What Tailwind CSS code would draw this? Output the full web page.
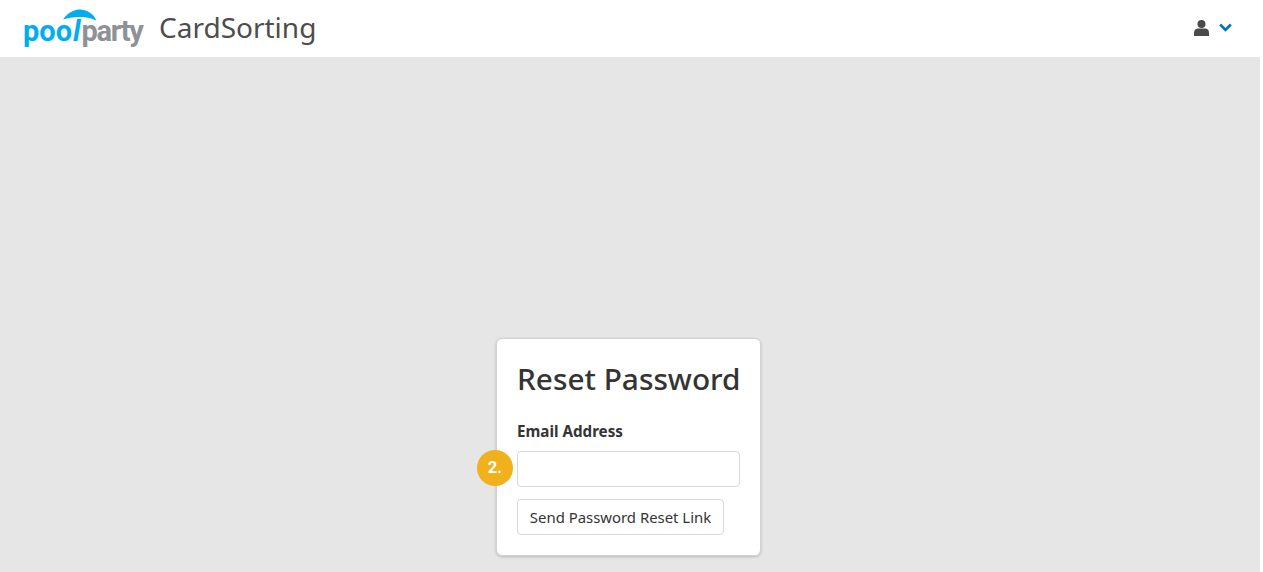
<!DOCTYPE html>
<html lang="en">
<head>
  <meta charset="UTF-8">
  <title>Reset Password | CardSorting</title>
  <script src="https://cdn.jsdelivr.net/npm/@tailwindcss/browser@4"></script>
</head>
<body class="bg-white h-[572px] overflow-hidden font-['Noto_Sans',sans-serif] text-[#343434]">
  <div class="w-[1260px] h-full flex flex-col bg-[#e6e6e6]">
    <!-- Header -->
    <header class="h-[57px] bg-white flex items-center justify-between pl-6 pr-[28px]">
      <div class="flex items-center">
        <div class="relative w-[120px] h-[46px]">
          <svg class="absolute left-[39px] top-[3px]" width="34" height="12" viewBox="0 0 34 12">
            <path d="M0 10.5 C5 3 12 0.5 17 0.5 C23 0.5 30 4 33.500 11.500 C27 8.500 21 7.500 15 8 C10 8.300 5 9 0 10.500 Z" fill="#00aeef"/>
          </svg>
          <div class="absolute left-[-1px] top-[6px] flex text-[29px] leading-[38px] font-['Roboto',sans-serif] font-bold">
            <span class="text-[#00aeef] tracking-[0px]">poo<i class="ml-[1px] mr-[1px]">l</i></span><span class="text-[#8d9297] tracking-[-1.3px]">party</span>
          </div>
        </div>
        <span class="ml-[15px] mt-[-4px] text-[28px] leading-[36px] text-[#4d4d4d] font-normal">CardSorting</span>
      </div>
      <div class="flex items-center gap-[10px] mt-[-2px]">
        <svg width="15" height="16" viewBox="0 0 15 16" fill="#4a4a4a">
          <circle cx="7.5" cy="4" r="4"/>
          <path d="M0 16 V12.500 C0 10 2 8.500 4 8.500 H11 C13 8.500 15 10 15 12.500 V16 Z"/>
        </svg>
        <svg width="13" height="9" viewBox="0 0 13 9" fill="none" stroke="#0074b3" stroke-width="2.6">
          <path d="M1.200 1.500 L6.500 6.800 L11.800 1.500"/>
        </svg>
      </div>
    </header>

    <!-- Card -->
    <main class="flex-1 flex justify-center pt-[281px]">
      <div class="w-[265px] h-[218px] ml-[-3px] bg-white border border-[#d2d2d2] rounded-[6px] shadow-[0_1px_3px_rgba(0,0,0,0.2)] px-5 pt-[17px]">
        <h1 class="text-[29.8px] leading-[46px] font-medium whitespace-nowrap">Reset Password</h1>
        <label class="block mt-[19px] text-[15.200px] leading-[20px] font-bold">Email Address</label>
        <div class="relative mt-[10px]">
          <span class="absolute left-[-40px] top-[-1px] w-9 h-9 rounded-full bg-[#f0b11d] text-white flex items-center justify-center text-[16.500px] font-bold font-['Roboto',sans-serif]">2.</span>
          <input type="text" class="block w-[223px] h-9 bg-white border border-[#d8d8d8] rounded-[4px]">
        </div>
        <button class="block mt-[12px] h-9 w-[207px] bg-white border border-[#d8d8d8] rounded-[4px] text-[14.900px] whitespace-nowrap">Send Password Reset Link</button>
      </div>
    </main>
  </div>
</body>
</html>
